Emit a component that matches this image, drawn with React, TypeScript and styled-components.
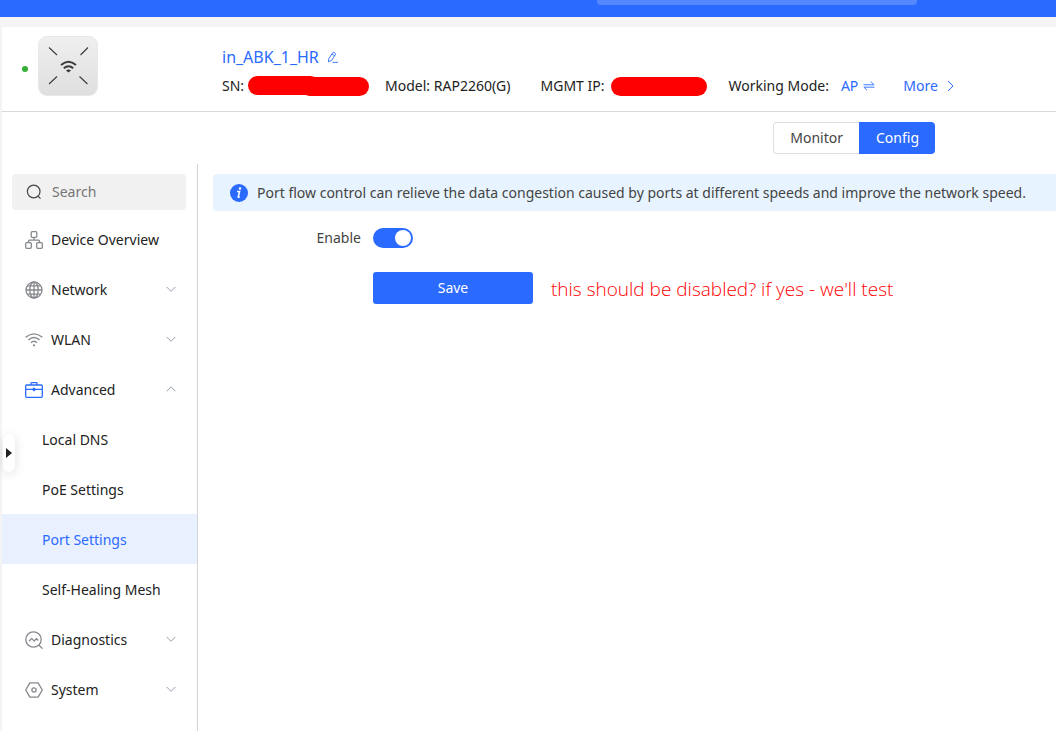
import React, { useState } from "react";
import styled, { createGlobalStyle, css } from "styled-components";

const blue = "#2b6aff";

const GlobalStyle = createGlobalStyle`
  * { box-sizing: border-box; }
  body {
    margin: 0;
    background: #f4f4f4;
    color: #222;
    font: 14px/20px "Noto Sans", "Open Sans", sans-serif;
  }
  button, input { font: inherit; color: inherit; }
  button { padding: 0; border: 0; background: none; cursor: pointer; }
  a { color: inherit; text-decoration: none; }
  svg { display: block; flex: none; }
`;

const Page = styled.div`
  display: flex;
  flex-direction: column;
  min-height: 100vh;
  overflow: hidden;
`;

const TopBar = styled.div`
  display: flex;
  height: 17px;
  padding-left: 597px;
  background: ${blue};
`;

const TopBarField = styled.div`
  width: 320px;
  height: 5px;
  border-radius: 0 0 4px 4px;
  background: #5588ff;
`;

const Panel = styled.main`
  position: relative;
  display: flex;
  flex: 1;
  flex-direction: column;
  margin: 10px 0 0 2px;
  background: #fff;
`;

const Header = styled.header`
  display: flex;
  align-items: center;
  height: 85px;
  padding: 0 20px;
  border-bottom: 1px solid #d8d8d8;
`;

const StatusDot = styled.span`
  width: 6px;
  height: 6px;
  margin: 0 10px 0 0;
  border-radius: 50%;
  background: #35b035;
`;

const DeviceImage = styled.div`
  width: 60px;
  height: 60px;
  margin: 0 124px 6px 0;
  border: 1px solid #e8e8e8;
  border-radius: 9px;
  background: linear-gradient(#efefef, #dfdfdf);
`;

const DeviceText = styled.div`
  display: flex;
  flex-direction: column;
  gap: 8px;
  margin-top: 3px;
  white-space: nowrap;
`;

const DeviceName = styled.button`
  display: flex;
  align-items: center;
  gap: 8px;
  color: ${blue};
  font-size: 16px;
  line-height: 22px;
`;

const InfoRow = styled.div`
  display: flex;
  align-items: center;
`;

const InfoItem = styled.span<{ $after: number; $gap?: number }>`
  display: flex;
  align-items: center;
  gap: ${(p) => p.$gap ?? 4}px;
  margin-right: ${(p) => p.$after}px;
`;

const InfoLink = styled.button`
  display: flex;
  align-items: center;
  gap: 5px;
  color: ${blue};
`;

const TabRow = styled.div`
  display: flex;
  justify-content: flex-end;
  padding: 10px 121px;
`;

const Tab = styled.button<{ $active?: boolean }>`
  height: 32px;
  padding: 0 16px;
  border: 1px solid #dcdfe6;
  border-right: 0;
  border-radius: 4px 0 0 4px;
  color: #444;
  ${(p) =>
    p.$active &&
    css`
      border-color: ${blue};
      border-radius: 0 4px 4px 0;
      background: ${blue};
      color: #fff;
    `}
`;

const Body = styled.div`
  display: flex;
  flex: 1;
`;

const Sidebar = styled.aside`
  flex: none;
  width: 196px;
  padding-top: 10px;
  border-right: 1px solid #d4d4d4;
`;

const SearchBox = styled.label`
  display: flex;
  align-items: center;
  gap: 10px;
  height: 36px;
  margin: 0 11px 4px 10px;
  padding: 0 14px;
  border-radius: 4px;
  background: #f1f1f1;
`;

const SearchInput = styled.input`
  width: 100%;
  min-width: 0;
  padding: 0;
  border: 0;
  outline: 0;
  background: none;
  &::placeholder { color: #757575; opacity: 1; }
`;

const MenuItem = styled.button`
  display: flex;
  align-items: center;
  gap: 8px;
  width: 100%;
  height: 50px;
  padding: 2px 21px 0 23px;
  text-align: left;
`;

const MenuLabel = styled.span`
  flex: 1;
  white-space: nowrap;
`;

const MenuArrow = styled.span`
  padding-bottom: 2px;
`;

const SubItem = styled.a<{ $active?: boolean }>`
  display: flex;
  align-items: center;
  height: 50px;
  padding: 2px 0 0 40px;
  background: ${(p) => (p.$active ? "#e9f0ff" : "transparent")};
  color: ${(p) => (p.$active ? blue : "inherit")};
`;

const Content = styled.section`
  flex: 1;
  min-width: 0;
  padding: 10px 0 0 15px;
`;

const Notice = styled.div`
  display: flex;
  align-items: center;
  gap: 9px;
  height: 37px;
  padding-left: 17px;
  border-radius: 4px 0 0 4px;
  background: #e7f4ff;
  color: #444;
  white-space: nowrap;
`;

const Form = styled.form`
  display: grid;
  grid-template-columns: 148px 1fr;
  align-items: center;
  gap: 24px 12px;
  padding-top: 17px;
`;

const FieldLabel = styled.label`
  color: #444;
  text-align: right;
`;

const Switch = styled.input`
  appearance: none;
  display: flex;
  width: 40px;
  height: 20px;
  margin: 0;
  padding: 2px;
  border-radius: 10px;
  background: #c0c4cc;
  cursor: pointer;
  &::before {
    content: "";
    width: 16px;
    height: 16px;
    border-radius: 50%;
    background: #fff;
  }
  &:checked { justify-content: flex-end; background: ${blue}; }
`;

const Actions = styled.div`
  display: flex;
  grid-column: 2;
  align-items: center;
  gap: 18px;
`;

const SaveButton = styled.button`
  width: 160px;
  height: 32px;
  border-radius: 3px;
  background: ${blue};
  color: #fff;
`;

const Remark = styled.span`
  padding-top: 2px;
  color: #f00;
  font: 300 19px/24px "Open Sans", "Noto Sans", sans-serif;
  white-space: nowrap;
`;

const DrawerHandle = styled.button`
  position: absolute;
  top: 407px;
  left: 1px;
  display: flex;
  align-items: center;
  justify-content: center;
  width: 12px;
  height: 38px;
  border-radius: 6px;
  background: #fff;
  box-shadow: 0 2px 12px rgba(0, 0, 0, 0.12);
`;

const Icon = ({ color = "#85888d", size = 18, width = 1.2, children }: {
  color?: string; size?: number; width?: number; children: React.ReactNode;
}) => (
  <svg width={size} height={size} viewBox={`0 0 ${size} ${size}`} fill="none"
    stroke={color} strokeWidth={width} strokeLinejoin="round" aria-hidden="true">
    {children}
  </svg>
);

const OverviewIcon = () => (
  <Icon width={1.3}>
    <rect x="6.2" y="0.7" width="5.6" height="5.6" rx="1" />
    <rect x="0.7" y="11.7" width="5.6" height="5.6" rx="1" />
    <rect x="11.7" y="11.7" width="5.6" height="5.6" rx="1" />
    <path d="M9 6.3v2.9M3.5 11.7v-1.5q0-1 1-1h9q1 0 1 1v1.5" />
  </Icon>
);

const GlobeIcon = () => (
  <Icon width={1.3}>
    <circle cx="9" cy="9" r="8" />
    <ellipse cx="9" cy="9" rx="4.2" ry="8" />
    <path d="M9 1v16M1 9h16M2.2 4.8h13.6M2.2 13.2h13.6" />
  </Icon>
);

const WifiIcon = () => (
  <Icon width={1.4}>
    <path d="M.6 6.3Q9-.6 17.4 6.3M3.4 9Q9 4.2 14.6 9M6 11.6Q9 9 12 11.6" />
    <circle cx="9" cy="14.3" r="1.100" fill="#85888d" stroke="none" />
  </Icon>
);

const BriefcaseIcon = () => (
  <Icon color={blue} width={1.3}>
    <rect x=".7" y="4" width="16.6" height="12.3" rx="1" />
    <path d="M6 4V2.300q0-.6.6-.6h4.800q.6 0 .6.6V4M.7 8.400h16.600" />
    <path d="M9 6.200l2.200 2.200L9 10.600 6.800 8.400z" fill={blue} stroke="none" />
  </Icon>
);

const DiagnosticsIcon = () => (
  <Icon width={1.3}>
    <circle cx="8.5" cy="8.5" r="7.7" />
    <path d="M13.800 14l3.700 3.600M4 10.300l2.700-2.900 2.600 2.700 2-2.500 2 1.800" />
  </Icon>
);

const SystemIcon = () => (
  <Icon width={1.3}>
    <path d="M4.900 1.800h8.200L17.300 9l-4.200 7.200H4.900L.7 9z" />
    <circle cx="9" cy="9" r="2.1" />
  </Icon>
);

const Chevron = ({ up }: { up?: boolean }) => (
  <svg width="10" height="8" viewBox="0 0 10 8" fill="none" stroke="#98a0ab" aria-hidden="true">
    <path d={up ? "M.6 6.300L5 1.900l4.400 4.400" : "M.6 1.900L5 6.300 9.400 1.900"} />
  </svg>
);

const menu = [
  { label: "Device Overview", icon: <OverviewIcon /> },
  { label: "Network", icon: <GlobeIcon />, expandable: true },
  { label: "WLAN", icon: <WifiIcon />, expandable: true },
  {
    label: "Advanced", icon: <BriefcaseIcon />, expandable: true,
    children: ["Local DNS", "PoE Settings", "Port Settings", "Self-Healing Mesh"],
  },
  { label: "Diagnostics", icon: <DiagnosticsIcon />, expandable: true },
  { label: "System", icon: <SystemIcon />, expandable: true },
];

export default function App() {
  const [enabled, setEnabled] = useState(true);
  return (
    <>
      <GlobalStyle />
      <Page>
        <TopBar><TopBarField /></TopBar>
        <Panel>
          <Header>
            <StatusDot />
            <DeviceImage>
              <svg width="58" height="58" viewBox="0 0 58 58" fill="none" stroke="#3a3a3a" strokeWidth="1.1" aria-hidden="true">
                <path d="M10 10.500l8 7.500M49 10.500L41.500 18M10 47l8-7.500M48.500 47l-8-7.500" />
                <path d="M22 28Q29.500 21.500 37 28M24.800 31.200Q29.500 27.200 34.200 31.200" strokeWidth="2" />
                <path d="M27 33.400q2.500-1.600 5 0L29.500 35.500z" fill="#3a3a3a" stroke="none" />
              </svg>
            </DeviceImage>
            <DeviceText>
              <DeviceName type="button">
                in_ABK_1_HR
                <svg width="12" height="12" viewBox="0 0 12 12" fill="none" stroke={blue} strokeWidth=".9" aria-hidden="true">
                  <path d="M1.300 10.800L1.800 7.800 5.600 1.800Q6.200 1 7 1.500L8.200 2.300Q8.900 2.900 8.400 3.700L4.400 9.600zM5 2.900L7.700 4.700M5.500 11.400H11" />
                </svg>
              </DeviceName>
              <InfoRow>
                <InfoItem $after={16}>
                  SN:
                  <svg width="121" height="20" viewBox="0 0 121 20" fill="#f00" aria-hidden="true">
                    <rect width="72" height="19" rx="9.5" />
                    <rect x="52" y="1" width="69" height="19" rx="9.5" />
                    <rect x="10" width="52" height="19" />
                  </svg>
                </InfoItem>
                <InfoItem $after={30}>Model: RAP2260(G)</InfoItem>
                <InfoItem $after={22} $gap={6}>
                  MGMT IP:
                  <svg width="96" height="20" viewBox="0 0 96 20" fill="#f00" aria-hidden="true">
                    <rect y="1" width="96" height="19" rx="9.5" />
                  </svg>
                </InfoItem>
                <InfoItem $after={28} $gap={12}>
                  Working Mode:
                  <InfoLink type="button">
                    AP
                    <svg width="12" height="10" viewBox="0 0 12 10" fill="none" stroke={blue} strokeWidth=".9" aria-hidden="true">
                      <path d="M.5 3.800h10.600L7.800 .6M11.500 6.200H.9l3.300 3.200" />
                    </svg>
                  </InfoLink>
                </InfoItem>
                <InfoLink type="button">
                  More
                  <svg width="14" height="12" viewBox="0 0 14 12" fill="none" stroke={blue} aria-hidden="true">
                    <path d="M5 1l5 5-5 5" />
                  </svg>
                </InfoLink>
              </InfoRow>
            </DeviceText>
          </Header>
          <TabRow>
            <Tab type="button">Monitor</Tab>
            <Tab type="button" $active>Config</Tab>
          </TabRow>
          <Body>
            <Sidebar>
              <SearchBox>
                <Icon color="#444" size={16} width={1.2}>
                  <circle cx="7.7" cy="7.5" r="6.3" />
                  <path d="M12 12.200l2.500 2.500" />
                </Icon>
                <SearchInput type="search" placeholder="Search" aria-label="Search" />
              </SearchBox>
              <nav>
                {menu.map((item) => (
                  <React.Fragment key={item.label}>
                    <MenuItem type="button">
                      {item.icon}
                      <MenuLabel>{item.label}</MenuLabel>
                      {item.expandable && <MenuArrow><Chevron up={!!item.children} /></MenuArrow>}
                    </MenuItem>
                    {item.children?.map((child) => (
                      <SubItem key={child} href="#" $active={child === "Port Settings"}>{child}</SubItem>
                    ))}
                  </React.Fragment>
                ))}
              </nav>
            </Sidebar>
            <Content>
              <Notice>
                <svg width="18" height="18" viewBox="0 0 18 18" aria-hidden="true">
                  <circle cx="9" cy="9" r="9" fill={blue} />
                  <circle cx="10" cy="4.5" r="1.3" fill="#fff" />
                  <path d="M7 7.500h2.600L8.200 13q-.1.800 1.500-.3" fill="none" stroke="#fff" strokeWidth="1.5" />
                </svg>
                Port flow control can relieve the data congestion caused by ports at different speeds and improve the network speed.
              </Notice>
              <Form onSubmit={(e) => e.preventDefault()}>
                <FieldLabel htmlFor="enable">Enable</FieldLabel>
                <Switch id="enable" type="checkbox" role="switch" checked={enabled}
                  onChange={(e) => setEnabled(e.target.checked)} />
                <Actions>
                  <SaveButton type="submit">Save</SaveButton>
                  <Remark>this should be disabled? if yes - we'll test</Remark>
                </Actions>
              </Form>
            </Content>
          </Body>
          <DrawerHandle type="button" aria-label="Open device list">
            <svg width="6" height="10" viewBox="0 0 6 10" fill="#222" aria-hidden="true">
              <path d="M0 0l6 5-6 5z" />
            </svg>
          </DrawerHandle>
        </Panel>
      </Page>
    </>
  );
}
